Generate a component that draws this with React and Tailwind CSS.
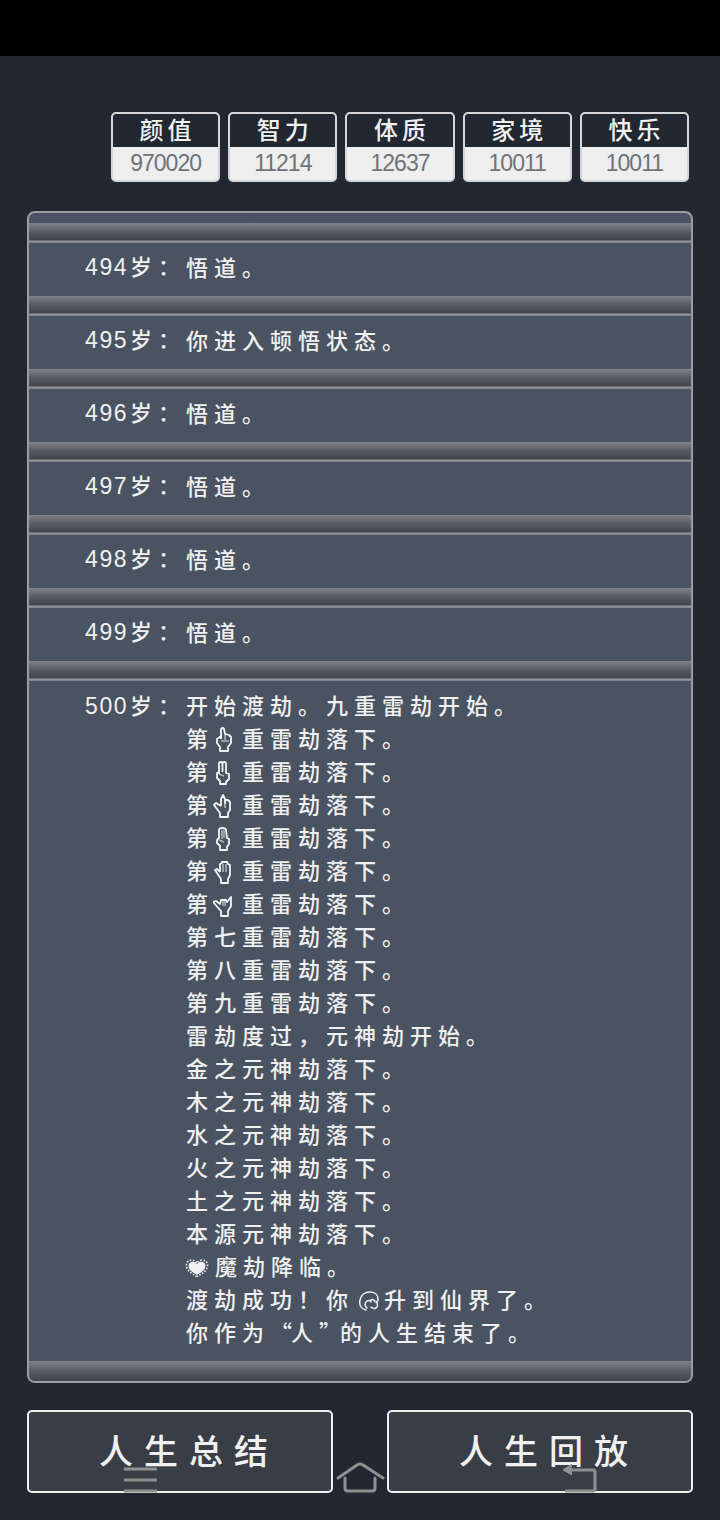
const font = { fontFamily: '"Noto Sans CJK SC", sans-serif' }

const hands = {
  1: ["M8 12V2q2-2 3 0l1 5 4 1 2 2v6l-3 4v4H7v-4l-3-4v-4l3-2h2", "M8 14h8M12 8v5"],
  2: ["M6 14V3q1.500-2 3.500 0v9M9.500 12V3q1.500-2 3.500 0v10l3 1v5l-3 3v2H7v-3l-3-3v-5l2-1", "M6 14l5 2"],
  3: ["M8 13V6l2-4 2 4v5M12 7h3l2 2v8l-2 3v4H7v-4L1 12l2-2 5 3", "M12 11v4"],
  4: ["M6 12V4q0-2 3-2 4 0 4 2l1 8 2 1v5l-2 3v3H7v-4l-3-3v-3l2-2z", "M9 4v9M11 4v8M6 14l5 2"],
  5: ["M7 13V5l2-1V3h5l1 2 2 1v10l-2 4v4H8v-4L2 11l2-1 3 3", "M10 5v8M13 5v8"],
  6: ["M14 10l4-5v9l-3 5v5H8v-5L0 10l3-1 4 3 1-4h5z", "M10 9v5M12 9v5"],
}

function Hand({ n }) {
  const [outline, detail] = hands[n]
  return (
    <svg viewBox="0 0 20 25" className="w-5 h-[25px] inline-block align-[-5px] -ml-px mr-[9px]" fill="none" strokeLinejoin="round">
      <path d={detail} stroke="#b4b8bd" strokeWidth="1.500" />
      <path d={outline} stroke="#f4f4f4" strokeWidth="1.800" />
    </svg>
  )
}

function Heart() {
  const shape = "M12 17C6 14 2 10.500 2 6.500 2 3.500 4 1.500 7 1.500 9.500 1.500 11 3 12 4.500 13 3 14.500 1.500 17 1.500 20 1.500 22 3.500 22 6.500 22 10.500 18 14 12 17z"
  return (
    <svg viewBox="1 0.500 22 17" className="w-6 h-[18px] inline-block align-[-2px] -ml-px mr-[6px]">
      <path d={shape} fill="none" stroke="#f2f2f2" strokeWidth="1.500" strokeDasharray="1.500 1.500" />
      <path d={shape} fill="#f2f2f2" transform="translate(2.400 1.800) scale(0.8)" />
    </svg>
  )
}

function Swirl() {
  return (
    <svg viewBox="0 0 20 20" className="w-5 h-5 inline-block align-[-3px] ml-[5px] mr-[5px]" fill="none" stroke="#f0f0f0" strokeWidth="1.500" strokeLinecap="round">
      <path d="M7 19C2 18 0 14 1 9 2 4 6 1 11 1c5 0 8 3 8 7 0 2-1 3-2 3 2 1 2 5 0 6-2 1-4 0-5-1" />
      <path d="M8 17c-2-1-3-5 0-7 2-1 4 0 4 1M12 9c2-1 4 0 4 2" />
    </svg>
  )
}

function Band({ line = true }) {
  return (
    <div className="h-5 shrink-0 flex flex-col">
      <div className={(line ? "h-[17px] " : "h-5 ") + "bg-gradient-to-b from-[#7f848a] via-[#585d64] to-[#40454d]"} />
      {line && <div className="h-[3px] bg-gradient-to-b from-[#5a5f66] via-[#8f9398] to-[#7a8088]" />}
    </div>
  )
}

function Age({ age }) {
  return (
    <div className="w-[157px] shrink-0 text-right whitespace-nowrap">
      <span className="tracking-[1.500px] text-[23px]" style={{ fontFamily: '"Liberation Sans", sans-serif' }}>{age}</span>
      <span className="tracking-[6px] ml-[2px]">岁：</span>
    </div>
  )
}

function LifeRow({ age, text }) {
  return (
    <>
      <Band />
      <div className="h-[53px] flex items-center tracking-[6px] pb-1.5">
        <Age age={age} />
        <div>{text}</div>
      </div>
    </>
  )
}

const lines = [
  "开始渡劫。九重雷劫开始。",
  <>第<Hand n={1} />重雷劫落下。</>,
  <>第<Hand n={2} />重雷劫落下。</>,
  <>第<Hand n={3} />重雷劫落下。</>,
  <>第<Hand n={4} />重雷劫落下。</>,
  <>第<Hand n={5} />重雷劫落下。</>,
  <>第<Hand n={6} />重雷劫落下。</>,
  "第七重雷劫落下。",
  "第八重雷劫落下。",
  "第九重雷劫落下。",
  "雷劫度过，元神劫开始。",
  "金之元神劫落下。",
  "木之元神劫落下。",
  "水之元神劫落下。",
  "火之元神劫落下。",
  "土之元神劫落下。",
  "本源元神劫落下。",
  <><Heart />魔劫降临。</>,
  <>渡劫成功！你<Swirl />升到仙界了。</>,
  <>你作为<span className="tracking-[-1px]">“</span>人<span className="tracking-[-1px]">”</span>的人生结束了。</>,
]

const stats = [
  ["颜值", "970020"],
  ["智力", "11214"],
  ["体质", "12637"],
  ["家境", "10011"],
  ["快乐", "10011"],
]

const rows = [
  [494, "悟道。"],
  [495, "你进入顿悟状态。"],
  [496, "悟道。"],
  [497, "悟道。"],
  [498, "悟道。"],
  [499, "悟道。"],
]

function App() {
  return (
    <div className="relative w-[720px] h-[1520px] overflow-hidden bg-[#222831] text-[#f0f0f0] text-[22px] leading-[33px] font-medium" style={font}>
      <div className="h-14 bg-black" />

      <div className="pt-14 pl-[111px] pr-[31px] flex gap-2">
        {stats.map(([name, value]) => (
          <div key={name} className="flex-1 h-[70px] rounded-[5px] border-2 border-[#d4d6d9] overflow-hidden bg-[#eeeeee]">
            <div className="h-[33px] bg-[#222831] flex items-center justify-center text-[24px] leading-none tracking-[4px] pl-1 pb-[3px]">{name}</div>
            <div className="h-[33px] flex items-center justify-center text-[#6f7378] text-[23px] leading-none font-normal tracking-[-1px]" style={{ fontFamily: '"Liberation Sans", sans-serif' }}>{value}</div>
          </div>
        ))}
      </div>

      <div className="mt-[29px] mx-[27px] h-[1172px] rounded-[8px] border-2 border-[#9a9da2] overflow-hidden bg-[#4a5361] pt-2.5 flex flex-col">
        {rows.map(([age, text]) => (
          <LifeRow key={age} age={age} text={text} />
        ))}
        <Band />
        <div className="flex-1 flex pt-[7px] tracking-[6px]">
          <Age age={500} />
          <div>
            {lines.map((line, i) => (
              <div key={i} className="h-[33px] whitespace-nowrap">{line}</div>
            ))}
          </div>
        </div>
        <Band line={false} />
      </div>

      <div className="mt-[27px] mx-[27px] flex justify-between">
        <button className="w-[306px] h-[83px] rounded-[5px] border-2 border-[#eeeeee] bg-[#393e46] text-[34px] tracking-[11px] pl-[18px] pb-1">人生总结</button>
        <button className="w-[306px] h-[83px] rounded-[5px] border-2 border-[#eeeeee] bg-[#393e46] text-[34px] tracking-[11px] pl-[18px] pb-1">人生回放</button>
      </div>

      {/* system nav buttons sit on top of the page */}
      <svg viewBox="0 0 720 60" className="absolute left-0 top-[1460px] w-[720px] h-[60px]" fill="none" stroke="#8f9092" strokeWidth="3">
        <path d="M124 9h33M124 20h33M124 31h33" />
        <path d="M338 18L357 5q3-2 6 0l20 13M345 18v10q0 3 3 3h24q3 0 3-3V18" strokeLinecap="round" />
        <path d="M564 10h29q2 0 2 2v17q0 2-2 2h-28" />
        <path d="M572 4l-9 6 9 5" fill="#8f9092" strokeWidth="1" />
      </svg>
    </div>
  )
}

export default App
